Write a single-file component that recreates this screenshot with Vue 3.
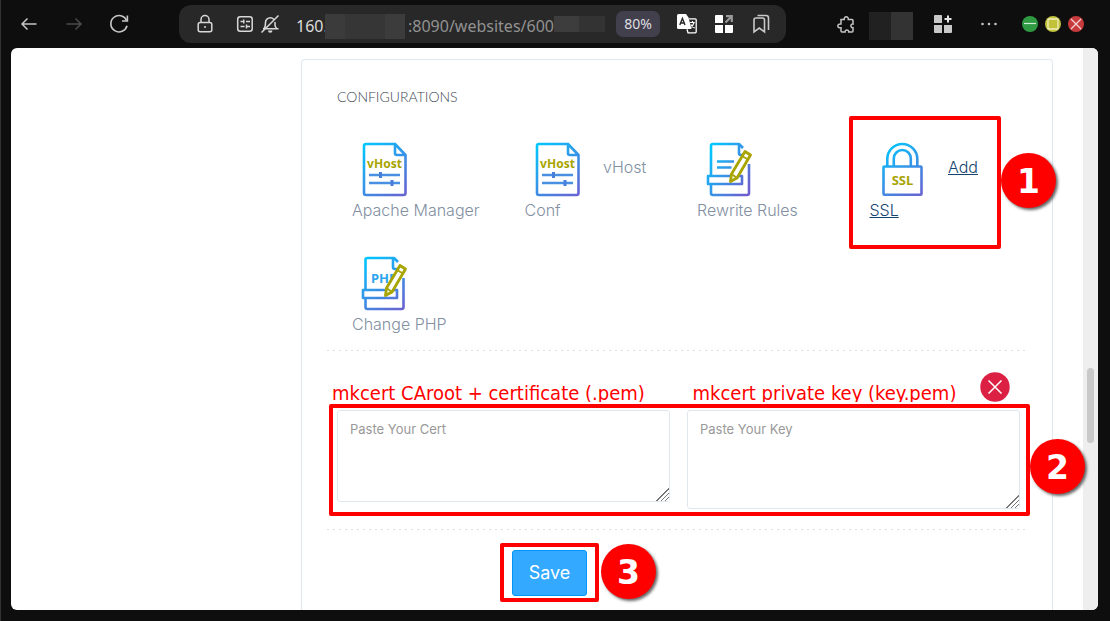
<script setup>
import { ref } from 'vue'

const cert = ref('')
const privateKey = ref('')
</script>

<template>
  <div class="window">
    <header class="toolbar">
      <nav class="nav">
        <button class="tool" aria-label="Back">
          <svg width="26" height="26" viewBox="0 0 26 26" fill="none" stroke="#c4c4c4" stroke-width="1.5"><path d="M20.500 13H6M11.500 7.500L6 13l5.500 5.500" /></svg>
        </button>
        <button class="tool" aria-label="Forward">
          <svg width="26" height="26" viewBox="0 0 26 26" fill="none" stroke="#4c4c4c" stroke-width="1.500"><path d="M5.500 13H20M14.500 7.500L20 13l-5.500 5.500" /></svg>
        </button>
        <button class="tool" aria-label="Reload">
          <svg width="26" height="26" viewBox="0 0 26 26" fill="none" stroke="#c8c8c8" stroke-width="1.600"><path d="M20.600 9.500A8.200 8.200 0 1 0 21 14.800" /><path d="M21.400 4.500V10H16" /></svg>
        </button>
      </nav>

      <div class="address">
        <button class="tool" aria-label="Site information">
          <svg width="20" height="20" viewBox="0 0 20 20" fill="none" stroke="#d8d8d8" stroke-width="1.500"><rect x="3.200" y="8.500" width="13.600" height="9.200" rx="2" /><path d="M6 8.500V5.500a4 4 0 0 1 8 0v3" /><circle cx="10" cy="13" r="1" fill="#d8d8d8" stroke="none" /></svg>
        </button>
        <button class="tool site-settings" aria-label="Site permissions">
          <svg width="20" height="20" viewBox="0 0 20 20" fill="none" stroke="#d8d8d8" stroke-width="1.500"><rect x="2.700" y="2.700" width="14.500" height="14.500" rx="2.500" /><path d="M5.500 7.500h3.500M8.800 5.500v4M11 7.500h4M5.500 12.500h4M11.500 10.500v4M12 12.500h3" /></svg>
        </button>
        <button class="tool muted" aria-label="Notifications blocked">
          <svg width="20" height="20" viewBox="0 0 20 20" fill="none" stroke="#d8d8d8" stroke-width="1.500"><path d="M4 14.500c1.500-1.500 1.500-2.500 1.500-6a4.800 4.800 0 0 1 8.200-3.300M15 8v3c0 1.500.5 2.500 1.800 3.500M3 14.700h15.500M1.500 18.500L18.500 1.500" /><path d="M8 16.500h4.500a2.200 2.200 0 0 1-4.500 0z" fill="#d8d8d8" stroke="none" /></svg>
        </button>
        <div class="url">
          <span class="host">160.</span><span class="mask host-mask"></span><span class="rest">:8090/websites/600</span><span class="mask id-mask"></span>
        </div>
        <button class="zoom-level">80%</button>
        <div class="address-actions">
          <button class="tool" aria-label="Translate">
            <svg width="20" height="20" viewBox="0 0 20 20"><path d="M1.500 0h7.500l2.500 3.500L14.500 15H1.500Q0 15 0 13.500v-12Q0 0 1.500 0z" fill="#fff" /><path d="M2.800 11L5.400 4.500 8 11M3.700 9h3.400" fill="none" stroke="#282828" stroke-width="1.400" /><path d="M12 4.800h6.200q1 0 1 1v12q0 1-1 1H11l-1-3.500" fill="none" stroke="#fff" stroke-width="1.300" /><path d="M12.800 8.500h5M15.500 7v1.500M17 8.500q-1 4-4 5.500M13.800 10.500q1.500 3 4 3.500" fill="none" stroke="#fff" stroke-width="1.200" /></svg>
          </button>
          <button class="tool" aria-label="Open apps">
            <svg width="20" height="20" viewBox="0 0 20 20"><path d="M2 1h6.200q.8 0 .8.800V9H1V2q0-1 1-1zM1 11h8v8H2q-1 0-1-1zM11 11h8v7q0 1-1 1h-7z" fill="#fff" /><path d="M12 2.200h5.800V8M17.500 2.500L11.500 8.500" fill="none" stroke="#999" stroke-width="2.200" /></svg>
          </button>
          <button class="tool" aria-label="Bookmarks">
            <svg width="20" height="20" viewBox="0 0 20 20" fill="none" stroke="#c9c9c9" stroke-width="1.600"><path d="M3 18V6q0-2 2-2h6.500q2 0 2 2v12l-5.200-4z" /><path d="M6.500 1.500h8.500q2.500 0 2.500 2.500v12" /></svg>
          </button>
        </div>
      </div>

      <div class="extensions">
        <button class="tool" aria-label="Extensions">
          <svg width="20" height="20" viewBox="0 0 20 20" fill="none" stroke="#c4c4c4" stroke-width="1.500"><path d="M5 5.500h3.200c-.5-3.600 4.600-3.600 4.100 0H16q1 0 1 1V10c-2.800-.6-2.800 4.300 0 3.700V17q0 1-1 1h-3.300c.4-2.800-4-2.800-3.600 0H6q-1 0-1-1v-3.200c-4.200.6-4.200-4.400 0-3.800z" /></svg>
        </button>
        <span class="mask profile-mask"></span>
        <button class="tool collections" aria-label="Collections">
          <svg width="20" height="20" viewBox="0 0 20 20"><path d="M2 1h6.200q.8 0 .8.800V9H1V2q0-1 1-1zM1 11h8v8H2q-1 0-1-1zM11 11h8v7q0 1-1 1h-7z" fill="#c8c8c8" /><path d="M15 1.500v7M11.500 5h7" stroke="#e4e4e4" stroke-width="2" /></svg>
        </button>
        <button class="tool more" aria-label="More">
          <svg width="20" height="20" viewBox="0 0 20 20" fill="#c4c4c4"><circle cx="3.500" cy="10" r="1.300" /><circle cx="10" cy="10" r="1.300" /><circle cx="16.500" cy="10" r="1.300" /></svg>
        </button>
        <div class="window-controls">
          <button class="tool" aria-label="Minimize"><svg width="16" height="16" viewBox="0 0 16 16"><circle cx="8" cy="8" r="8" fill="#2f9a41" /><path d="M2 7.500h12" stroke="#d3ecd6" stroke-width="1.200" /></svg></button>
          <button class="tool" aria-label="Maximize"><svg width="16" height="16" viewBox="0 0 16 16"><circle cx="8" cy="8" r="8" fill="#c2c13a" /><rect x="3" y="3" width="10" height="10" rx="1" fill="none" stroke="#eeeebd" stroke-width="1.300" /></svg></button>
          <button class="tool" aria-label="Close window"><svg width="16" height="16" viewBox="0 0 16 16"><circle cx="8" cy="8" r="8" fill="#c83b3d" /><path d="M3 3l10 10M13 3L3 13" stroke="#f5d3d3" stroke-width="1.300" /></svg></button>
        </div>
      </div>
    </header>

    <div class="page">
      <main class="content">
        <section class="panel">
          <h3>CONFIGURATIONS</h3>

          <div class="grid">
            <a href="#apache" class="item">
              <svg class="icon" viewBox="0 0 55 55">
                <defs><linearGradient id="apacheGradient" gradientUnits="userSpaceOnUse" x1="6" y1="2" x2="50" y2="54"><stop offset="0" stop-color="#00c8ff" /><stop offset="1" stop-color="#6b60cf" /></linearGradient></defs>
                <g fill="none" stroke="url(#apacheGradient)" stroke-width="2.600" stroke-linejoin="round"><path d="M38 2H9Q7 2 7 4v47q0 2 2 2h37.500q2 0 2-2V13L38 2v9q0 2 2 2h8" /></g>
                <g stroke="#4a90e2" stroke-width="2.400"><path d="M12 33h31M12 41h31" /><path d="M23.500 30v6M35 38v6" stroke-width="3" stroke="#477fda" /></g>
                <text x="27.500" y="26" text-anchor="middle">vHost</text>
              </svg><br>Apache Manager
            </a>
            <a href="#vhost" class="item">
              <svg class="icon" viewBox="0 0 55 55">
                <defs><linearGradient id="vhostGradient" gradientUnits="userSpaceOnUse" x1="6" y1="2" x2="50" y2="54"><stop offset="0" stop-color="#00c8ff" /><stop offset="1" stop-color="#6b60cf" /></linearGradient></defs>
                <g fill="none" stroke="url(#vhostGradient)" stroke-width="2.600" stroke-linejoin="round"><path d="M38 2H9Q7 2 7 4v47q0 2 2 2h37.500q2 0 2-2V13L38 2v9q0 2 2 2h8" /></g>
                <g stroke="#4a90e2" stroke-width="2.400"><path d="M12 33h31M12 41h31" /><path d="M23.500 30v6M35 38v6" stroke-width="3" stroke="#477fda" /></g>
                <text x="27.500" y="26" text-anchor="middle">vHost</text>
              </svg> vHost<br>Conf
            </a>
            <a href="#rewrite" class="item">
              <svg class="icon" viewBox="0 0 55 55">
                <defs><linearGradient id="rewriteGradient" gradientUnits="userSpaceOnUse" x1="6" y1="10" x2="50" y2="40"><stop offset="0" stop-color="#00c8ff" /><stop offset="1" stop-color="#6b60cf" /></linearGradient></defs>
                <g fill="none" stroke="url(#rewriteGradient)" stroke-width="2.600" stroke-linejoin="round">
                  <path d="M9 33V4q0-2 2-2H37l4 4M37 2v9q0 2 2 2h3M47 22v29q0 2-2 2H11q-2 0-2-2v-9M15 19.500h17M15 25.500h14.500M6 34h34v8H6z" />
                </g>
                <path d="M43 9.500l5.500 3.500L35 36l-6.500 3.500L29.500 32z" fill="#fff" stroke="#a8a400" stroke-width="2.800" stroke-linejoin="round" />
                <path d="M40 14l6 3.500M29.500 32l5.500 4" stroke="#a8a400" stroke-width="2" />
              </svg><br>Rewrite Rules
            </a>
            <div class="item">
              <a href="#ssl" class="active">
                <svg class="icon" viewBox="0 0 55 55">
                  <defs><linearGradient id="sslGradient" gradientUnits="userSpaceOnUse" x1="10" y1="2" x2="48" y2="54"><stop offset="0" stop-color="#00c8ff" /><stop offset="1" stop-color="#6b60cf" /></linearGradient></defs>
                  <g fill="none" stroke="url(#sslGradient)" stroke-width="2.600" stroke-linejoin="round">
                    <path d="M12.300 24V17a15 15 0 0 1 30 0v7M18.800 24V16.500a8.500 8.500 0 0 1 17 0V24" />
                    <rect x="8.500" y="24.500" width="38" height="28.200" rx="1" />
                  </g>
                  <text x="27.500" y="43" text-anchor="middle" class="ssl">SSL</text>
                </svg> <u>Add</u><br><u>SSL</u>
              </a>
              <span class="outline ssl-outline"></span>
              <span class="step ssl-step">1</span>
            </div>
            <a href="#php" class="item">
              <svg class="icon" viewBox="0 0 55 55">
                <defs><linearGradient id="phpGradient" gradientUnits="userSpaceOnUse" x1="8" y1="2" x2="46" y2="54"><stop offset="0" stop-color="#00c8ff" /><stop offset="1" stop-color="#6b60cf" /></linearGradient></defs>
                <g fill="none" stroke="url(#phpGradient)" stroke-width="2.600" stroke-linejoin="round">
                  <path d="M8.500 33V4q0-2 2-2H37l4 4M36 2v9q0 2 2 2h3M46.500 22v29q0 2-2 2H10.500q-2 0-2-2v-9M6 34h34v8H6z" />
                </g>
                <text x="27" y="27" text-anchor="middle" class="php">PHP</text>
                <path d="M43 9.500l5.500 3.500L35 36l-6.500 3.500L29.500 32z" fill="#fff" stroke="#a8a400" stroke-width="2.800" stroke-linejoin="round" />
                <path d="M40 14l6 3.500M29.500 32l5.500 4" stroke="#a8a400" stroke-width="2" />
              </svg><br>Change PHP
            </a>
          </div>

          <hr>

          <form @submit.prevent>
            <div class="captions">
              <label for="cert">mkcert CAroot + certificate (.pem)</label>
              <label for="key" class="key-caption">mkcert private key (key.pem)</label>
              <button type="button" class="dismiss" aria-label="Close">
                <svg width="30" height="30" viewBox="0 0 30 30"><circle cx="15" cy="15" r="14.700" fill="#db2044" /><path d="M8.500 8.500l13 13M21.500 8.500l-13 13" stroke="#fff" stroke-width="1.500" /></svg>
              </button>
            </div>
            <div class="fields">
              <textarea id="cert" v-model="cert" class="cert" placeholder="Paste Your Cert"></textarea>
              <textarea id="key" v-model="privateKey" class="key" placeholder="Paste Your Key"></textarea>
              <span class="outline fields-outline"></span>
              <span class="step fields-step">2</span>
            </div>
            <hr>
            <div class="actions">
              <div class="save-wrap">
                <button class="save">Save</button>
                <span class="outline save-outline"></span>
                <span class="step save-step">3</span>
              </div>
            </div>
          </form>
        </section>
      </main>
      <div class="scrollbar"><span class="thumb"></span></div>
    </div>
  </div>
</template>

<style>
body {
  background: #0e0e0e;
}
</style>

<style scoped>
* {
  box-sizing: border-box;
}
.window {
  display: flex;
  flex-direction: column;
  height: 100vh;
  background: #0e0e0e;
  border-left: 1px solid #333;
  font-family: Inter, "Liberation Sans", sans-serif;
}
.toolbar {
  display: flex;
  align-items: center;
  flex: none;
  height: 48px;
  padding: 0 26px 0 15px;
}
.nav {
  display: flex;
  gap: 19px;
}
.tool {
  display: flex;
  flex: none;
  padding: 0;
  border: 0;
  background: none;
}
.address {
  display: flex;
  flex: 1;
  align-items: center;
  min-width: 0;
  height: 38px;
  margin-left: 47px;
  padding: 0 15px 0 16px;
  border-radius: 12px;
  background: #282828;
}
.site-settings {
  margin-left: 20px;
}
.muted {
  margin-left: 5px;
}
.url {
  display: flex;
  flex: 1;
  align-items: center;
  min-width: 0;
  overflow: hidden;
  margin-left: 16px;
  padding-top: 4px;
  color: #929292;
  font: 16px/24px "Noto Sans", sans-serif;
  white-space: nowrap;
}
.host {
  width: 29px;
  color: #dcdcdc;
}
.mask {
  flex: none;
}
.host-mask {
  width: 80px;
  height: 25px;
  margin-right: 3px;
  background: linear-gradient(90deg, #3b3b3b 25%, #363636 25%, #363636 75%, #3c3c3c 75%);
}
.id-mask {
  width: 51px;
  height: 16px;
  margin-bottom: 4px;
  background: linear-gradient(90deg, #3d3d3d 50%, #333 50%);
}
.zoom-level {
  width: 44px;
  height: 26px;
  padding: 0;
  border: 0;
  border-radius: 7px;
  background: #42404d;
  color: #dedee2;
  font: 14px/26px "Noto Sans", sans-serif;
}
.address-actions {
  display: flex;
  gap: 17px;
  margin-left: 17px;
}
.extensions {
  display: flex;
  align-items: center;
  margin-left: 50px;
}
.profile-mask {
  width: 44px;
  height: 28px;
  margin: 4px 0 0 13px;
  background: linear-gradient(90deg, #212121 50%, #333 50%);
}
.collections {
  margin-left: 20px;
}
.more {
  margin-left: 26px;
}
.window-controls {
  display: flex;
  gap: 7px;
  margin-left: 23px;
}
.page {
  display: flex;
  flex: 1;
  min-height: 0;
  margin: 0 12px 11px 10px;
  overflow: hidden;
  border-radius: 6px;
  background: #fff;
}
.content {
  flex: 1;
  min-width: 0;
  padding: 11px 30px 0 290px;
}
.panel {
  min-height: 100%;
  padding: 27px 25px 40px 35px;
  border: 1px solid #dfe8f1;
  border-bottom: 0;
  border-radius: 4px 4px 0 0;
}
h3 {
  margin: 0 0 32px;
  color: #3e4855;
  font: 300 14px/20px Lato, sans-serif;
}
.grid {
  display: grid;
  grid-template-columns: repeat(4, 1fr);
  row-gap: 32px;
}
.item {
  position: relative;
  padding-left: 15px;
  color: #8290a2;
  font-size: 16px;
  font-weight: 300;
  line-height: 22px;
  text-decoration: none;
  white-space: nowrap;
}
.active {
  color: #164470;
  text-decoration: none;
}
.icon {
  width: 55px;
  height: 55px;
  margin: 3px 14px 2px 5px;
  vertical-align: middle;
}
.icon text {
  fill: #a8a400;
  font: 700 12px "Noto Sans", sans-serif;
}
.icon .ssl {
  font-size: 13px;
}
.icon .php {
  fill: #2ea5ee;
  font-size: 13px;
}
hr {
  height: 1px;
  margin: 15px 0 21px -10px;
  border: 0;
  background: repeating-linear-gradient(90deg, #dcdfe6 0 2px, transparent 2px 6px);
}
.captions {
  display: grid;
  grid-template-columns: 1fr 1fr;
  position: relative;
  align-items: end;
  height: 30px;
  margin: 0 7px 8px -5px;
  column-gap: 17px;
}
.captions label {
  overflow: hidden;
  height: 22px;
  color: #f00;
  font: 20px/26px "DejaVu Sans Condensed", "DejaVu Sans", sans-serif;
  white-space: nowrap;
}
.captions .key-caption {
  padding-left: 8px;
}
.dismiss {
  position: absolute;
  top: 0;
  right: 10px;
  display: flex;
  padding: 0;
  border: 0;
  background: none;
}
.fields {
  position: relative;
  display: grid;
  grid-template-columns: 1fr 1fr;
  align-items: start;
  gap: 17px;
  margin-right: 7px;
}
textarea {
  width: 100%;
  padding: 10px 12px;
  border: 1px solid #dfe8f1;
  border-radius: 3px;
  background: #fff;
  color: #2b2f33;
  font: 13px/16px Inter, sans-serif;
  resize: both;
}
textarea::placeholder {
  color: #999;
}
textarea::-webkit-resizer {
  background: linear-gradient(135deg, #fff 50%, transparent 50%), repeating-linear-gradient(135deg, #777 0 1px, #fff 1px 3px);
}
.cert {
  height: 92px;
}
.key {
  height: 99px;
}
.fields + hr {
  margin: 20px 0 20px -10px;
}
.actions {
  padding-left: 175px;
}
.save-wrap {
  position: relative;
  width: 75px;
}
.save {
  width: 75px;
  height: 46px;
  padding: 0;
  border: 1px solid #0094ff;
  border-radius: 3px;
  background: #33aaff;
  color: #fff;
  font: 18px/24px Inter, sans-serif;
}
.outline {
  position: absolute;
  border: 4px solid #f00;
  border-radius: 2px;
  pointer-events: none;
}
.ssl-outline {
  inset: -23px 26px auto -6px;
  height: 133px;
}
.fields-outline {
  inset: -6px -10px -7px -8px;
}
.save-outline {
  inset: -7px -12px -6px;
}
.step {
  position: absolute;
  z-index: 2;
  width: 55px;
  height: 55px;
  border-radius: 50%;
  background: #f00;
  box-shadow: 2px 2px 3px rgba(0, 0, 0, 0.6);
  color: #fff;
  font: 700 33px/57px "DejaVu Sans", sans-serif;
  text-align: center;
}
.ssl-step {
  top: 14px;
  right: -29px;
}
.fields-step {
  top: 29px;
  right: -65px;
}
.save-step {
  top: -6px;
  left: 89px;
}
.scrollbar {
  position: relative;
  width: 15px;
  background: #eee;
}
.thumb {
  position: absolute;
  top: 57%;
  right: 4px;
  width: 7px;
  height: 75px;
  border-radius: 4px;
  background: #c9c9c9;
}
</style>
